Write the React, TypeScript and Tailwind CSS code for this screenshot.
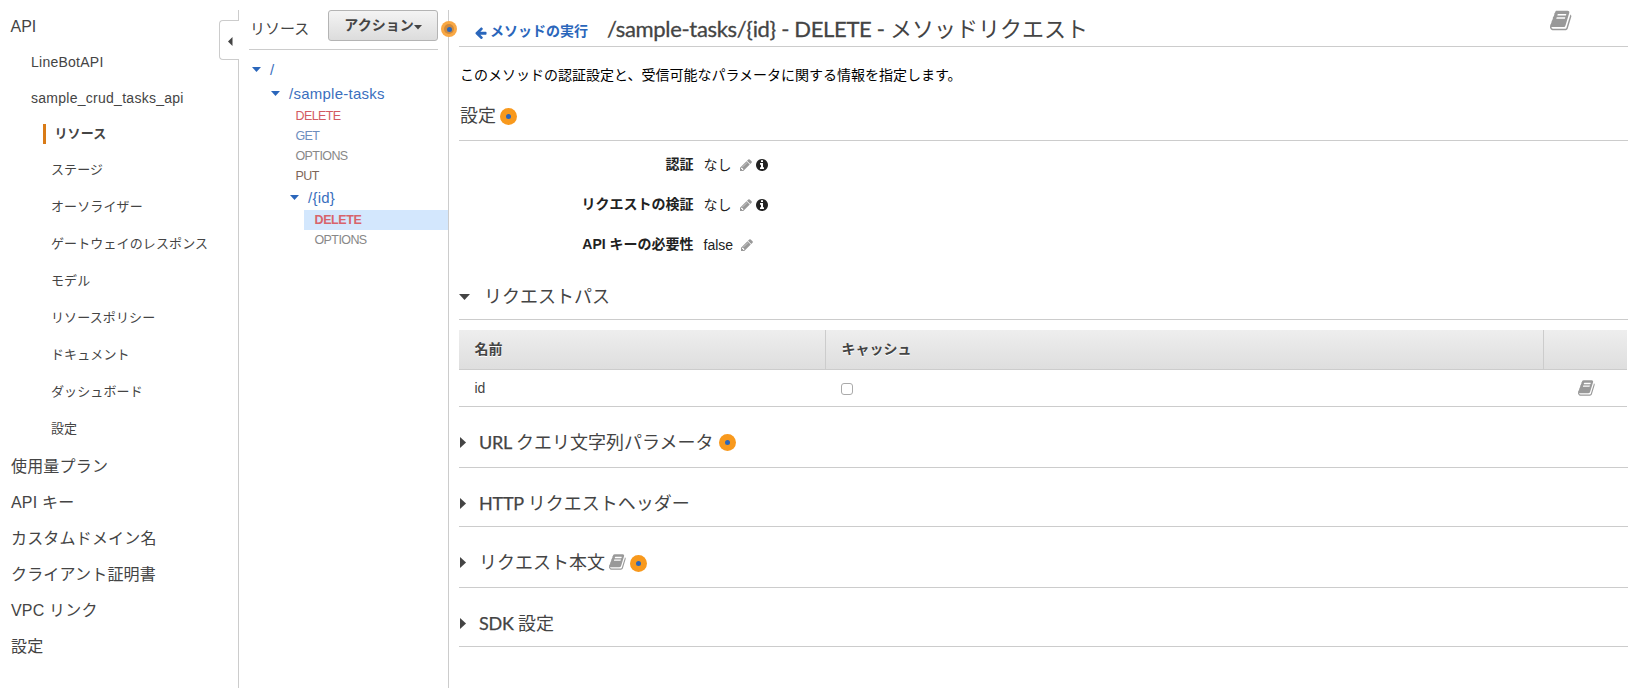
import React from "react";

const GLYPHS = {
  book: "M1639 478q40 57 18 129l-275 906q-19 64-76.5 107.5t-122.5 43.5h-923q-77 0-148.5-53.5t-99.5-131.5q-24-67-2-127 0-4 3-27t4-37q1-8-3-21.5t-3-19.5q2-11 8-21t16.5-23.5 16.5-23.5q23-38 45-91.5t30-91.5q3-10 .5-30t-.5-28q3-11 17-28t17-23q21-36 42-92t25-90q1-9-2.5-32t.5-28q4-13 22-30.5t22-22.5q19-26 42.5-84.5t27.5-96.5q1-8-3-25.5t-2-26.5q2-8 9-18t18-23 17-21q8-12 16.5-30.5t15-35 16-36 19.5-32 26.5-23.5 36-11.5 47.5 5.5l-1 3q38-9 51-9h761q74 0 114 56t18 130l-274 906q-36 119-71.5 153.5t-128.5 34.5h-869q-27 0-38 15-11 16-1 43 24 70 144 70h923q29 0 56-15.5t35-41.5l300-987q7-22 5-57 38 15 59 43zm-1064 2q-4 13 2 22.5t20 9.5h608q13 0 25.5-9.5t16.5-22.5l21-64q4-13-2-22.5t-20-9.5h-608q-13 0-25.5 9.5t-16.5 22.5zm-83 256q-4 13 2 22.5t20 9.5h608q13 0 25.5-9.5t16.5-22.5l21-64q4-13-2-22.5t-20-9.5h-608q-13 0-25.5 9.5t-16.5 22.5z",
  pencil: "M491 1536l91-91-235-235-91 91v107h128v128h107zm523-928q0-22-22-22-10 0-17 7l-542 542q-7 7-7 17 0 22 22 22 10 0 17-7l542-542q7-7 7-17zm-54-192l416 416-832 832h-416v-416zm683 96q0 53-37 90l-166 166-416-416 166-165q36-38 90-38 53 0 91 38l235 234q37 39 37 91z",
  info: "M1152 1376v-160q0-14-9-23t-23-9h-96v-512q0-14-9-23t-23-9h-320q-14 0-23 9t-9 23v160q0 14 9 23t23 9h96v320h-96q-14 0-23 9t-9 23v160q0 14 9 23t23 9h448q14 0 23-9t9-23zm-128-896v-160q0-14-9-23t-23-9h-192q-14 0-23 9t-9 23v160q0 14 9 23t23 9h192q14 0 23-9t9-23zm640 416q0 209-103 385.5t-279.5 279.5-385.5 103-385.5-103-279.5-279.5-103-385.5 103-385.5 279.5-279.5 385.5-103 385.5 103 279.5 279.5 103 385.5z",
  arrow: "M1664 896v128q0 53-32.5 90.5t-84.5 37.5h-704l293 294q38 36 38 90t-38 90l-75 76q-37 37-90 37-52 0-91-37l-651-652q-37-37-37-90 0-52 37-91l651-650q38-38 91-38 52 0 90 38l75 74q38 38 38 91t-38 91l-293 293h704q52 0 84.5 37.5t32.5 90.5z",
};

function Glyph({ name, className }: { name: keyof typeof GLYPHS; className: string }) {
  return (
    <svg viewBox="0 0 1792 1792" fill="currentColor" className={"shrink-0 " + className}>
      <path d={GLYPHS[name]} />
    </svg>
  );
}

function Triangle({ dir, className }: { dir: "down" | "right" | "left"; className: string }) {
  const d = { down: "M0 0H10L5 5.5Z", right: "M0 0V10L5.5 5Z", left: "M5 0V10L0 5Z" }[dir];
  return (
    <svg viewBox={dir === "down" ? "0 0 10 6" : "0 0 6 10"} fill="currentColor" className={"shrink-0 " + className}>
      <path d={d} />
    </svg>
  );
}

function Hint() {
  return (
    <span className="flex size-[17px] shrink-0 items-center justify-center rounded-full bg-[#f8991d]">
      <span className="size-[5px] rounded-full bg-[#2a66bb]" />
    </span>
  );
}

const SUB_ITEMS = ["オーソライザー", "ゲートウェイのレスポンス", "モデル", "リソースポリシー", "ドキュメント", "ダッシュボード", "設定"];
const BOTTOM_ITEMS = ["使用量プラン", "API キー", "カスタムドメイン名", "クライアント証明書", "VPC リンク", "設定"];

function Sidebar() {
  return (
    <nav className="relative w-[239px] shrink-0 pt-2 text-[#444]">
      <div className="flex h-9 items-center pt-0.5 pl-[10.5px] text-[16px]">API</div>
      <div className="flex h-9 items-center pl-[31px] text-[14px] tracking-[0.25px]">LineBotAPI</div>
      <div className="flex h-9 items-center pl-[31px] text-[14px] tracking-[0.27px]">sample_crud_tasks_api</div>
      <div className="flex h-9 items-center pl-[43px] text-[13px] font-bold">
        <span className="flex h-5 items-center border-l-3 border-[#d97b17] pb-0.5 pl-[8.5px] tracking-[0.1px]">リソース</span>
      </div>
      <div className="flex h-9 items-center pb-0.5 pl-[51px] text-[13px] tracking-[0.12px]">ステージ</div>
      {SUB_ITEMS.map((t) => (
        <div key={t} className="flex h-[37px] items-center pl-[51px] text-[13px] tracking-[0.12px]">{t}</div>
      ))}
      <div className="mt-[2px]">
        {BOTTOM_ITEMS.map((t) => (
          <div key={t} className="flex h-9 items-center pl-[11px] text-[16px] tracking-[0.18px]">{t}</div>
        ))}
      </div>
      <div className="absolute top-2.5 right-0 bottom-0 w-px bg-[#ccc]" />
      <div className="absolute top-5 right-0 flex h-10 w-5 items-center rounded-l border border-r-0 border-[#ccc] bg-white pl-2">
        <Triangle dir="left" className="mt-0.5 h-[9px] w-[5.4px] text-[#444]" />
      </div>
    </nav>
  );
}

function Resources() {
  return (
    <aside className="relative w-[210px] shrink-0 pt-2.5">
      <div className="ml-[10px] flex h-10 w-[189px] items-start justify-between border-b border-[#ccc]">
        <span className="mt-[7px] pl-px font-['Lato','Noto_Sans_CJK_JP',sans-serif] text-[15px] leading-[23px] text-[#444]">リソース</span>
        <button className="flex h-[31px] w-[110px] items-center justify-center rounded-[3px] border border-[#b4b4b4] bg-linear-to-b from-[#f4f4f4] to-[#dcdcdc] pb-0.5 text-[14px] font-bold text-[#444]">
          アクション
          <Triangle dir="down" className="mt-1.5 h-[4.8px] w-2" />
        </button>
      </div>
      <div className="pt-2 text-[15px] tracking-[0.25px] text-[#3a6fbe]">
        <div className="flex h-6 items-center pl-[13px]">
          <Triangle dir="down" className="h-[5.4px] w-[9px] text-[#2a66bb]" />
          <span className="pb-0.5 pl-[9px]">/</span>
        </div>
        <div className="flex h-6 items-center pl-8">
          <Triangle dir="down" className="h-[5.4px] w-[9px] text-[#2a66bb]" />
          <span className="pb-0.5 pl-[9px]">/sample-tasks</span>
        </div>
      </div>
      <div className="pl-[56.5px] text-[12.5px] tracking-[-0.6px]">
        <div className="flex h-5 items-center text-[#d25b62]">DELETE</div>
        <div className="flex h-5 items-center text-[#6d8dbd]">GET</div>
        <div className="flex h-5 items-center text-[#888]">OPTIONS</div>
        <div className="flex h-5 items-center text-[#7d6557]">PUT</div>
      </div>
      <div className="flex h-6 items-center pl-[51px] text-[15px] tracking-[0.25px] text-[#3a6fbe]">
        <Triangle dir="down" className="h-[5.4px] w-[9px] text-[#2a66bb]" />
        <span className="pb-0.5 pl-[9px]">/{"{id}"}</span>
      </div>
      <div className="pl-[65px] text-[12.5px]">
        <div className="flex h-5 items-center bg-[#d3e7fd] pl-[10.5px] font-bold tracking-[-0.4px] text-[#d8646b]">DELETE</div>
        <div className="flex h-5 items-center pl-[10.5px] tracking-[-0.6px] text-[#888]">OPTIONS</div>
      </div>
      <div className="absolute top-2.5 right-0 bottom-0 w-px bg-[#ccc]" />
      <span className="absolute top-[21px] -right-[8px] flex size-4 items-center justify-center rounded-full bg-[#f9a844]">
        <span className="flex size-2.5 items-center justify-center rounded-full bg-[#d08a3c]">
          <span className="size-[5px] rounded-full bg-[#2a66bb]" />
        </span>
      </span>
    </aside>
  );
}

function Setting({ label, value, info }: { label: string; value: string; info?: boolean }) {
  return (
    <div className="flex h-10 items-center text-[14px] text-[#222]">
      <span className="w-[234.5px] pb-0.5 text-right font-bold">{label}</span>
      <span className="pb-px pl-2.5">{value}</span>
      <Glyph name="pencil" className="ml-[7px] size-[14px] text-[#999]" />
      {info && <Glyph name="info" className="ml-[2px] size-[14px]" />}
    </div>
  );
}

function Collapsed({ latin, title, className, children }: { latin?: string; title: string; className: string; children?: React.ReactNode }) {
  return (
    <div className={"flex items-center border-b border-[#ccc] font-['Lato','Noto_Sans_CJK_JP',sans-serif] text-[18px] text-[#444] " + className}>
      <Triangle dir="right" className="ml-px h-[11px] w-[6.6px]" />
      <span className="pl-[12.5px] whitespace-pre">
        {latin && <span className="tracking-[-0.25px] [-webkit-text-stroke:0.25px_#444]">{latin} </span>}
        {title}
      </span>
      {children}
    </div>
  );
}

function Main() {
  return (
    <main className="w-[1179px] shrink-0 pl-[10px]">
      <header className="flex h-[47px] items-start border-b border-[#ccc] font-['Lato','Noto_Sans_CJK_JP',sans-serif]">
        <a className="mt-5 flex h-6 w-[148px] items-center pl-[15px] text-[14px] font-bold text-[#2a66bb]">
          <Glyph name="arrow" className="mt-0.5 size-[13.5px]" />
          <span className="pb-0.5 pl-[2.5px]">メソッドの実行</span>
        </a>
        <h1 className="mt-[11px] text-[22px] leading-9 text-[#444]">
          <span className="tracking-[-0.33px] [-webkit-text-stroke:0.3px_#444]">/sample-tasks/{"{id}"} - DELETE - </span>
          メソッドリクエスト
        </h1>
        <Glyph name="book" className="mt-[9px] mr-[55px] ml-auto size-[23px] text-[#999]" />
      </header>
      <p className="mt-[18px] pl-px text-[14px] leading-5 text-black">このメソッドの認証設定と、受信可能なパラメータに関する情報を指定します。</p>
      <div className="flex h-[56px] items-center gap-1 border-b border-[#ccc] pt-[7px] pl-px font-['Lato','Noto_Sans_CJK_JP',sans-serif] text-[18px] text-[#444]">
        <span className="pb-0.5">設定</span>
        <Hint />
      </div>
      <div className="pt-1">
        <Setting label="認証" value="なし" info />
        <Setting label="リクエストの検証" value="なし" info />
        <Setting label="API キーの必要性" value="false" />
      </div>
      <div className="flex h-[55px] items-center border-b border-[#ccc] pt-[9px] font-['Lato','Noto_Sans_CJK_JP',sans-serif] text-[18px] text-[#444]">
        <Triangle dir="down" className="mt-0.5 h-[6.6px] w-[11px]" />
        <span className="pb-0.5 pl-[14px]">リクエストパス</span>
      </div>
      <div className="mt-2.5 w-[1168px] text-[14px] text-[#444]">
        <div className="grid h-10 grid-cols-[367px_718px_1fr] border-b border-[#ccc] bg-linear-to-b from-[#eee] to-[#dedede] font-bold [text-shadow:0_1px_0_#fff]">
          <div className="flex items-center border-r border-[#ccc] pb-0.5 pl-[15.5px]">名前</div>
          <div className="flex items-center border-r border-[#ccc] pb-0.5 pl-[15.5px]">キャッシュ</div>
          <div />
        </div>
        <div className="grid h-[37px] grid-cols-[367px_718px_1fr] items-center border-b border-[#ccc]">
          <div className="pl-[15.5px]">id</div>
          <div className="pl-[15px]">
            <span className="mt-0.5 block size-3 rounded-[3px] border border-[#aaa] bg-white" />
          </div>
          <Glyph name="book" className="ml-[34px] size-[18px] text-[#999]" />
        </div>
      </div>
      <Collapsed latin="URL" title="クエリ文字列パラメータ" className="h-[61px] pt-2.5">
        <span className="pl-[6px]"><Hint /></span>
      </Collapsed>
      <Collapsed latin="HTTP" title="リクエストヘッダー" className="h-[59px] pt-3" />
      <Collapsed title="リクエスト本文" className="h-[61px] pt-2.5">
        <Glyph name="book" className="ml-[4px] size-[18px] text-[#999]" />
        <span className="pt-0.5 pl-[3px]"><Hint /></span>
      </Collapsed>
      <Collapsed latin="SDK" title="設定" className="h-[59px] pt-3" />
    </main>
  );
}

export default function App() {
  return (
    <div className="flex h-[688px] w-[1635px] overflow-hidden bg-white font-['Liberation_Sans','Noto_Sans_CJK_JP',sans-serif] leading-none">
      <Sidebar />
      <Resources />
      <Main />
    </div>
  );
}
